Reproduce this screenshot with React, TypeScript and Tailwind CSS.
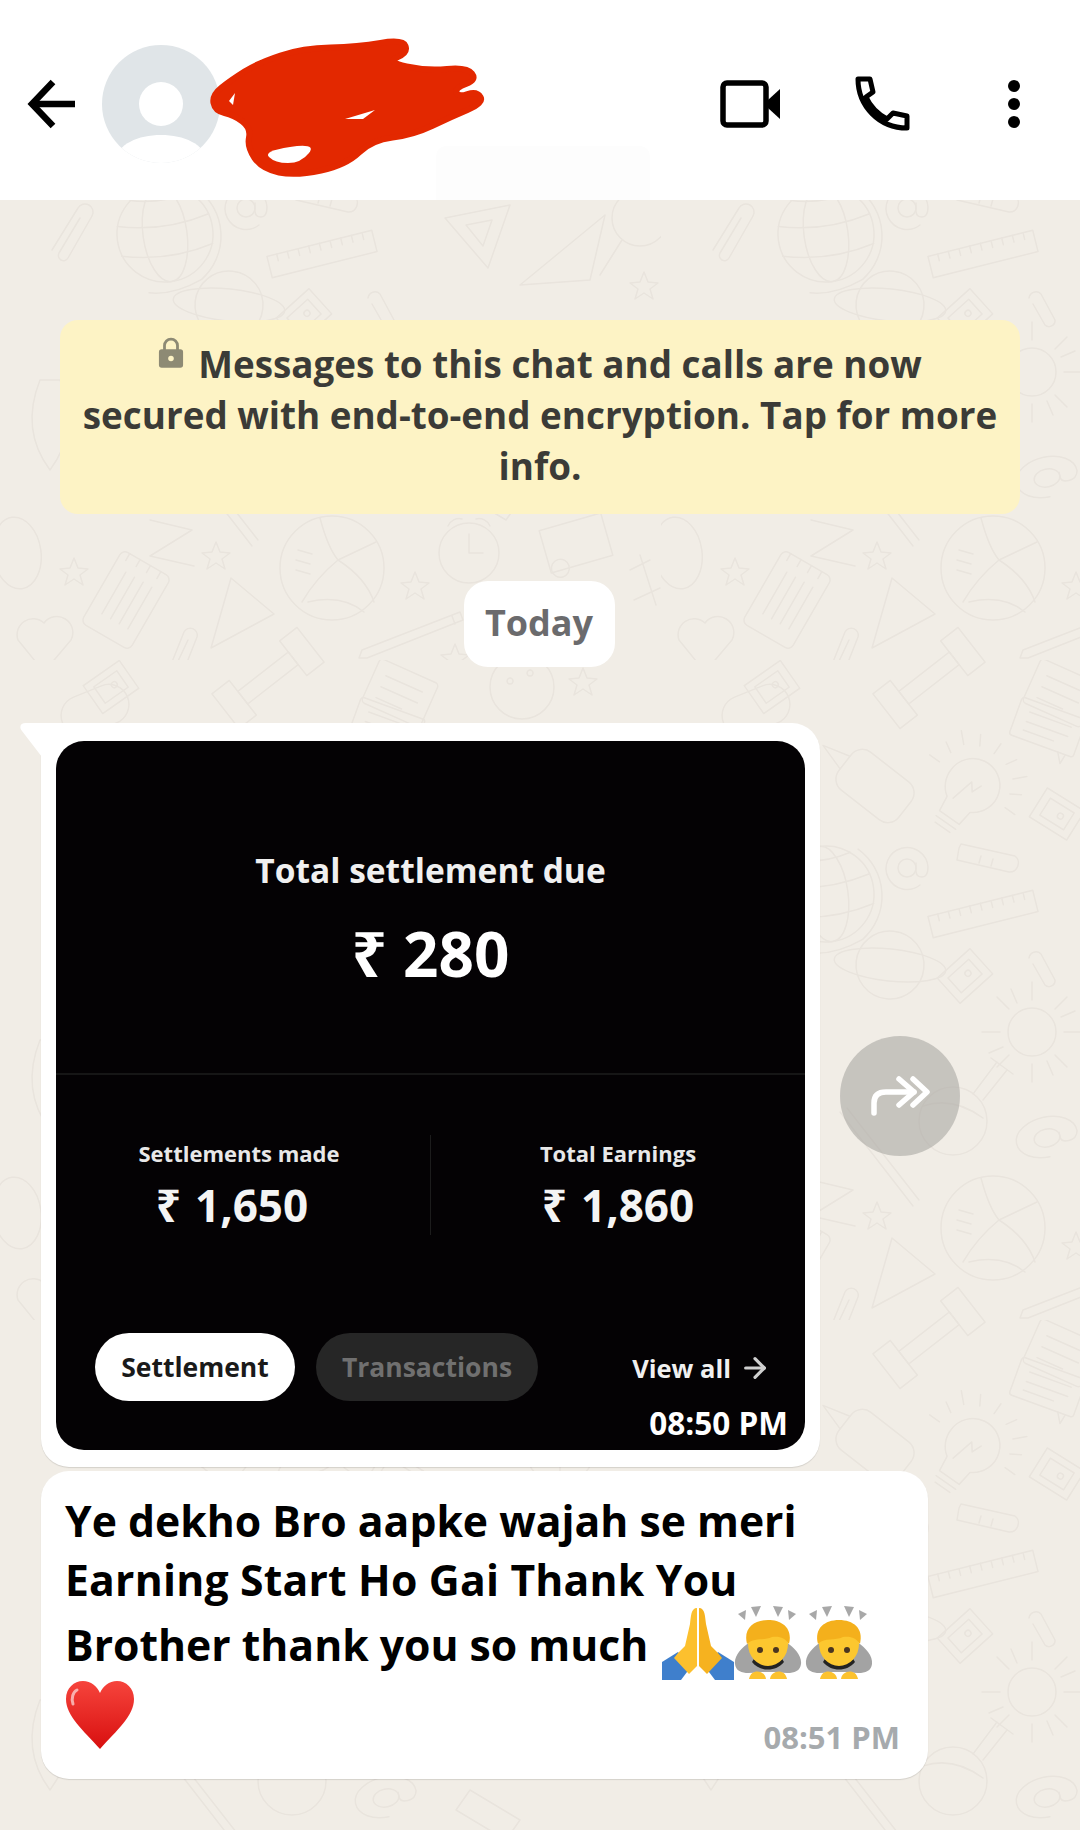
import React from "react";
import { ArrowRight } from "lucide-react";

const font = { fontFamily: '"Open Sans", "Noto Sans", sans-serif' };

const star = "l4 10 10 1-8 6 3 10-9-6-9 6 3-10-8-6 10-1Z";

// closed curve through the midpoints of a hand traced outline
const smooth = (pts: number[][]) => {
  const mid = (a: number[], b: number[]) => [(a[0] + b[0]) / 2, (a[1] + b[1]) / 2];
  const start = mid(pts[pts.length - 1], pts[0]);
  let d = `M${start[0]} ${start[1]}`;
  pts.forEach((p, i) => {
    const m = mid(p, pts[(i + 1) % pts.length]);
    d += `Q${p[0]} ${p[1]} ${m[0]} ${m[1]}`;
  });
  return d + "Z";
};

const scribbleOutline = [
  [198, 4], [203, 18], [181, 27], [222, 36], [262, 32], [272, 45], [250, 53], [253, 62], [272, 56], [279, 68],
  [246, 82], [208, 100], [167, 105], [141, 130], [91, 141], [57, 134], [42, 112], [46, 93], [29, 80], [10, 76],
  [7, 60], [26, 45], [53, 28], [98, 13], [153, 12],
];

// doodles are placed by hand inside one 661x660 tile, page coords mod tile
const Wallpaper = () => (
  <svg className="absolute inset-0 h-full w-full" xmlns="http://www.w3.org/2000/svg">
    <defs>
      <pattern id="doodles" x="0" y="-200" width="661" height="660" patternUnits="userSpaceOnUse">
        <g fill="none" stroke="#e9e4dd" strokeWidth="1.5" strokeLinecap="round" strokeLinejoin="round">
          {/* globe */}
          <g transform="translate(165 234) rotate(-8)">
            <circle r="48" />
            <ellipse rx="22" ry="48" />
            <path d="M-46-14Q0-2 46-14M-46 16Q0 28 46 16M-30-38Q0-30 30-38" />
            <path d="M38-40A58 58 0 0 1 30 50M-24 56Q0 62 30 50" />
          </g>
          {/* paper clips */}
          <path d="M52 250L78 208a8 8 0 0 1 14 8L68 258a5 5 0 0 1-9-5L80 218" />
          <path d="M168 672L184 632a7 7 0 0 1 13 5L180 680a5 5 0 0 1-9-4L188 640" />
          <path d="M368 298a7 7 0 0 1 12-4L394 320a6 6 0 0 1-10 5L372 304" />
          {/* ruler */}
          <g transform="translate(322 254) rotate(-14)">
            <rect x="-54" y="-11" width="108" height="22" />
            <path d="M-44-11v7M-33-11v7M-22-11v7M-11-11v7M0-11v7M11-11v7M22-11v7M33-11v7M44-11v7" />
          </g>
          {/* set squares */}
          <path d="M445 218L510 205 488 268ZM466 225L492 220 483 246Z" />
          <path d="M520 285L605 215 590 280Z" />
          <path d="M211 648L231 578 274 614Z" />
          {/* magnifier */}
          <circle cx="640" cy="218" r="28" />
          <path d="M622 240L600 275" />
          {/* stars */}
          <path d={`M644 272${star}`} />
          <path d={`M415 572${star}`} />
          <path d={`M216 542${star}`} />
          <path d={`M74 558${star}`} />
          <path d={`M455 644${star}`} />
          <path d={`M583 8${star}`} />
          {/* at signs */}
          <g transform="translate(246 208)">
            <circle r="9" />
            <path d="M9-5v8q0 6 6 6t6-10a21 21 0 1 0-8 18" />
          </g>
          <g transform="translate(386 478) rotate(-12)">
            <ellipse rx="13" ry="9" />
            <path d="M13-3v5q0 5 8 5t10-8c0-12-14-20-30-20s-32 8-32 20 14 20 30 20" />
          </g>
          {/* glue bottle */}
          <g transform="translate(214 126) rotate(38)">
            <rect x="-38" y="-24" width="76" height="48" rx="14" />
            <path d="M-38-8L-66 0-38 8" />
          </g>
          {/* bulb */}
          <g transform="translate(309 128) rotate(35)">
            <path d="M-26-4A27 27 0 1 1 14 20L12 36H-12L-14 20A27 27 0 0 1-26-4Z" />
            <path d="M-12 42H12M-9 48H9M-8 18L-2-6 4 2 8-8" />
            <path d="M-40-4H-52M40-4H52M-30-32L-40-42M30-32L40-42M0-42V-54M-16-40L-22-50M16-40L22-50M36-18L46-24M-36-18L-46-24" />
          </g>
          {/* notes */}
          <g transform="translate(386 69) rotate(20)">
            <rect x="-34" y="-22" width="68" height="40" rx="3" />
            <path d="M-22-10H22M-22 0H22M-22 9H10M18 18L24 28 26 18" />
          </g>
          <g transform="translate(576 543) rotate(-16)">
            <rect x="-32" y="-22" width="64" height="44" />
            <circle cx="-22" cy="20" r="9" />
          </g>
          <g transform="translate(400 33) rotate(24)">
            <rect x="-32" y="-24" width="64" height="48" rx="4" />
            <path d="M-20-10H20M-20 2H20M-20 14H8" />
          </g>
          {/* sharpeners */}
          <g transform="translate(396 154) rotate(32)">
            <rect x="-22" y="-17" width="44" height="34" />
            <rect x="-14" y="-10" width="28" height="20" />
            <circle cx="4" r="3" />
          </g>
          <g transform="translate(304 316) rotate(-42)">
            <rect x="-22" y="-17" width="44" height="34" />
            <rect x="-14" y="-10" width="28" height="20" />
            <circle cx="4" r="3" />
          </g>
          <g transform="translate(111 27) rotate(-35)">
            <rect x="-22" y="-17" width="44" height="34" />
            <rect x="-14" y="-10" width="28" height="20" />
            <circle cx="4" r="3" />
          </g>
          {/* test tube */}
          <path d="M298 188L296 200 348 212a9 9 0 0 0 6-16L300 184ZM320 196l-2 7M332 199l-2 7" />
          {/* saturn */}
          <g transform="translate(229 305) rotate(6)">
            <circle r="34" />
            <ellipse rx="56" ry="16" />
          </g>
          {/* sun */}
          <circle cx="371" cy="372" r="24" />
          <path d="M371 340v-18M371 404v18M339 372h-18M403 372h18M348 349l-12-12M394 395l12 12M394 349l12-12M348 395l-12 12M356 343l-6-14M386 401l6 14M342 387l-14 6M400 357l14-6" />
          {/* flask */}
          <circle cx="292" cy="461" r="34" />
          <path d="M312 434L336 402M322 440L346 410M330 398L352 414M262 446Q292 436 322 458" />
          {/* long pin */}
          <path d="M179 452L252 546M186 448L258 540" />
          {/* volleyball */}
          <g transform="translate(332 568)">
            <circle r="52" />
            <path d="M-12-50Q-4-20 6-8L44-26M6-8Q-16 10-30 34M6-8Q34 10 42 34M-24 34Q10 26 32 44M-34-18l14 4M-36-8l14 4M-36 2l14 4" />
          </g>
          {/* clock */}
          <circle cx="469" cy="553" r="30" />
          <path d="M469 534v19h14M448 526a12 12 0 0 1 14-7M490 526a12 12 0 0 0-14-7" />
          {/* heart */}
          <path d="M44 672L18 640a16 16 0 0 1 26-17 16 16 0 0 1 27 17Z" />
          {/* notebook */}
          <g transform="translate(126 600) rotate(30)">
            <rect x="-28" y="-42" width="56" height="84" rx="6" />
            <path d="M-14-24V24M-4-24V24M6-24V24M16-24V24M-20-42V-34M-8-42V-34M4-42V-34M16-42V-34" />
          </g>
          {/* pencil */}
          <path d="M362 650L460 612l3 8-96 38-8 0ZM452 616l3 8" />
          {/* dumbbell */}
          <g transform="translate(268 678) rotate(-38)">
            <rect x="-54" y="-22" width="22" height="44" />
            <rect x="32" y="-22" width="22" height="44" />
            <rect x="-32" y="-8" width="64" height="16" />
          </g>
          <g transform="translate(268 18) rotate(-38)">
            <rect x="-54" y="-22" width="22" height="44" />
            <rect x="32" y="-22" width="22" height="44" />
            <rect x="-32" y="-8" width="64" height="16" />
          </g>
          {/* letters and odds */}
          <ellipse cx="17" cy="553" rx="24" ry="36" transform="rotate(-8 17 553)" />
          <path d="M150 520L192 530 150 556 194 566" />
          <path d="M630 570L650 560M634 600L660 588M640 555L656 605" />
          <circle cx="522" cy="27" r="32" />
          <path d="M510 18a3 3 0 1 0 .1 0M530 10a3 3 0 1 0 .1 0" />
          <path d="M40 380Q20 430 50 470Q80 430 60 380Z" />
          <circle cx="560" cy="130" r="34" />
          <path d="M530 112Q560 130 590 112M560 96v68" />
          <path d="M600 400l50 30-12 20-50-30Z" />
          <rect x="60" y="30" width="70" height="40" rx="20" transform="rotate(-22 95 50)" />
          <rect x="430" y="340" width="50" height="70" rx="8" transform="rotate(-18 455 375)" />
          <circle cx="560" cy="420" r="22" />
          <path d="M470 470L520 500 506 520 456 490Z" />
        </g>
      </pattern>
    </defs>
    <rect width="100%" height="100%" fill="url(#doodles)" />
  </svg>
);

const BackIcon = () => (
  <svg width="50" height="50" viewBox="0 0 50 50" fill="none" stroke="#000" strokeWidth="6.5">
    <path d="M6 25H48" />
    <path d="M26 3L5 25 26 47" />
  </svg>
);

const VideoIcon = () => (
  <svg width="62" height="48" viewBox="0 0 62 48">
    <rect x="3" y="3" width="43" height="42" rx="4" fill="none" stroke="#000" strokeWidth="5.5" />
    <path d="M48 20L60 9V39L48 28Z" fill="#000" />
  </svg>
);

const PhoneIcon = () => (
  <svg width="56" height="55" viewBox="0 0 56 55" fill="none">
    <path
      d="M3 3H15L18 16 11 21C15 30 23 38 32 43L38 37 52 40V52C24 52 3 30 3 3Z"
      stroke="#000"
      strokeWidth="5"
      strokeLinejoin="round"
    />
  </svg>
);

const Dots = () => (
  <div className="flex flex-col gap-[6px]">
    <div className="h-[12px] w-[12px] rounded-full bg-black" />
    <div className="h-[12px] w-[12px] rounded-full bg-black" />
    <div className="h-[12px] w-[12px] rounded-full bg-black" />
  </div>
);

const Avatar = () => (
  <svg width="118" height="118" viewBox="0 0 118 118" className="shrink-0">
    <defs>
      <clipPath id="avatarClip">
        <circle cx="59" cy="59" r="59" />
      </clipPath>
    </defs>
    <circle cx="59" cy="59" r="59" fill="#e0e5e8" />
    <g clipPath="url(#avatarClip)" fill="#fff">
      <circle cx="59" cy="59" r="22" />
      <path d="M12 116C16 99 36 90 59 90S102 99 106 116Q59 122 12 116Z" />
    </g>
  </svg>
);

const Scribble = () => (
  <svg className="absolute left-[205px] top-[35px]" width="285" height="150" viewBox="0 0 285 150">
    <path d={smooth(scribbleOutline)} fill="#e32800" stroke="#e32800" strokeWidth="6" strokeLinejoin="round" />
    <path d={smooth([[58, 116], [112, 108], [96, 128], [70, 128]])} fill="#fff" />
    <path d="M140 84L170 75 158 84Z" fill="#fff" />
    <path d="M24 66L30 58 28 70Z" fill="#fff" />
  </svg>
);

const ForwardIcon = () => (
  <svg width="60" height="42" viewBox="0 0 60 42" fill="none" stroke="#fff" strokeWidth="5.5" strokeLinecap="round" strokeLinejoin="round">
    <path d="M4 38V28C4 20 9 17 16 17H44" />
    <path d="M29 4L44 17 29 30" />
    <path d="M43 4L57 17 43 30" />
  </svg>
);

const PrayEmoji = () => (
  <svg width="72" height="74" viewBox="0 0 72 74" className="shrink-0">
    <path d="M0 74V56L16 46 28 62 19 74Z" fill="#3f7fcc" />
    <path d="M72 74V56L56 46 44 62 53 74Z" fill="#3f7fcc" />
    <path d="M35 2C29 2 29 10 28 18L23 40 16 47 12 52 27 68 35 60Z" fill="#fcc02e" />
    <path d="M37 2C43 2 43 10 44 18L49 40 56 47 60 52 45 68 37 60Z" fill="#f6b21f" />
  </svg>
);

const BowEmoji = () => (
  <svg width="68" height="74" viewBox="0 0 68 74" className="shrink-0">
    <g fill="#a8a8a8">
      <path d="M11 14L4 8 12 4Z" />
      <path d="M22 11L17 1 27 0Z" />
      <path d="M44 11L49 1 39 0Z" />
      <path d="M55 14L62 8 54 4Z" />
    </g>
    <path d="M16 36C7 42 0 50 1 58 2 68 14 68 24 66H44C54 68 66 68 67 58 68 50 61 42 52 36Z" fill="#a3a3a3" />
    <path d="M18 56C26 66 42 66 50 56L44 46H24Z" fill="#232323" />
    <ellipse cx="34" cy="38" rx="20" ry="22" fill="#fcc72f" />
    <path d="M13 38C9 22 20 14 34 14S59 22 55 38C51 32 46 30 38 31 30 35 20 31 13 38Z" fill="#f4b01c" />
    <circle cx="26" cy="44" r="3" fill="#4a3520" />
    <circle cx="42" cy="44" r="3" fill="#4a3520" />
    <path d="M15 73C17 62 31 64 32 73Z" fill="#fcc22e" />
    <path d="M53 73C51 62 37 64 36 73Z" fill="#fcc22e" />
  </svg>
);

const HeartEmoji = () => (
  <svg width="70" height="70" viewBox="0 0 70 70" className="shrink-0">
    <defs>
      <linearGradient id="heartFill" x1="0" y1="0" x2="0" y2="1">
        <stop offset="0" stopColor="#f6443c" />
        <stop offset="1" stopColor="#d80f0f" />
      </linearGradient>
    </defs>
    <path d="M35 69C18 50 1 36 1 19 1 8 9 1 18 1 26 1 32 6 35 13 38 6 44 1 52 1 61 1 69 8 69 19 69 36 52 50 35 69Z" fill="url(#heartFill)" />
    <path d="M12 10C8 12 6 18 8 24" stroke="#fff" strokeOpacity="0.6" strokeWidth="3" fill="none" strokeLinecap="round" />
  </svg>
);

const Stat = ({ label, value, shift }: { label: string; value: string; shift?: boolean }) => (
  <div className="flex flex-1 flex-col items-center">
    <div className={`text-[22px] font-bold leading-[30px] text-[#e8e8e8] ${shift ? "pr-[8px]" : ""}`}>{label}</div>
    <div className={`mt-[10px] flex items-center gap-[14px] text-[44px] font-bold leading-[54px] text-[#f4f4f4] ${shift ? "pr-[22px]" : ""}`}>
      <span>₹</span>
      <span>{value}</span>
    </div>
  </div>
);

const SettlementCard = () => (
  <div className="relative flex h-[709px] w-[749px] flex-col rounded-[28px] bg-[#040204] text-white">
    <div className="flex h-[334px] flex-col items-center border-b-2 border-[#161616] pt-[107px]">
      <div className="text-[33.5px] font-bold leading-[44px] text-[#f0f0f0]">Total settlement due</div>
      <div className="mt-[21px] flex items-center gap-[16px] text-[62px] font-bold leading-[80px]">
        <span>₹</span>
        <span>280</span>
      </div>
    </div>
    <div className="mt-[60px] flex h-[100px] items-center">
      <Stat label="Settlements made" value="1,650" shift />
      <div className="h-[100px] w-[1px] bg-[#1c1c1c]" />
      <Stat label="Total Earnings" value="1,860" />
    </div>
    <div className="mt-[98px] flex items-center pl-[39px] pr-[34px]">
      <div className="flex h-[68px] w-[200px] items-center justify-center rounded-full bg-white pt-[2px] text-[26.5px] font-bold text-[#1a1a1a]">
        Settlement
      </div>
      <div className="ml-[21px] flex h-[68px] w-[222px] items-center justify-center rounded-full bg-[#262626] pt-[2px] text-[26.5px] font-bold text-[#707070]">
        Transactions
      </div>
      <div className="ml-auto flex items-center gap-[8px] pt-[2px] text-[25.5px] font-bold text-[#f0f0f0]">
        View all
        <ArrowRight size={32} strokeWidth={2.4} color="#cfcfcf" />
      </div>
    </div>
    <div className="absolute bottom-[5px] right-[17px] text-[31.5px] font-bold leading-[44px] text-white">08:50 PM</div>
  </div>
);

export default function App() {
  return (
    <div className="relative flex h-[1830px] w-[1080px] flex-col overflow-hidden bg-white" style={font}>
      <header className="flex h-[200px] shrink-0 items-center bg-white pl-[27px] pr-[60px] pt-[7px]">
        <BackIcon />
        <div className="ml-[25px]">
          <Avatar />
        </div>
        <div className="ml-auto mr-[73px]">
          <VideoIcon />
        </div>
        <div className="mr-[97px]">
          <PhoneIcon />
        </div>
        <Dots />
        <Scribble />
      </header>

      <main className="relative flex-1 bg-[#f1ede6]">
        <Wallpaper />
        <div className="relative flex h-full flex-col">
          <div className="mx-[60px] mt-[120px] flex h-[194px] flex-col items-center justify-center rounded-[18px] bg-[#fdf3c5] px-[10px] pb-[4px] text-center text-[36.8px] font-bold leading-[51px] text-[#3b3b37]">
            <div className="flex items-start gap-[14px]">
              <svg width="26" height="32" viewBox="0 0 28 34" className="mt-[-2px] shrink-0">
                <path d="M7 14V9a7 7 0 0 1 14 0v5" fill="none" stroke="#8d8a74" strokeWidth="3" />
                <rect x="1" y="13" width="26" height="20" rx="3" fill="#8d8a74" />
                <circle cx="14" cy="23" r="3" fill="#fdf3c5" />
              </svg>
              <span>Messages to this chat and calls are now</span>
            </div>
            <div>secured with end-to-end encryption. Tap for more</div>
            <div>info.</div>
          </div>

          <div className="mr-[2px] mt-[67px] flex h-[86px] w-[151px] items-center justify-center self-center rounded-[24px] bg-white pb-[2px] text-[36px] font-bold text-[#6b6b6d]">
            Today
          </div>

          <div className="mt-[56px] flex items-center gap-[20px] pl-[41px]">
            <div className="relative w-[779px] rounded-[28px] rounded-tl-none bg-white px-[15px] pb-[17px] pt-[18px] shadow-[0_1px_1px_rgba(0,0,0,0.12)]">
              <svg className="absolute left-[-21px] top-0" width="22" height="34" viewBox="0 0 22 34">
                <path d="M22 34L2 8C-1 4 0 0 6 0H22Z" fill="#fff" />
              </svg>
              <SettlementCard />
            </div>
            <div className="mt-[1px] flex h-[120px] w-[120px] items-center justify-center rounded-full bg-[#aaa8a3]/60">
              <ForwardIcon />
            </div>
          </div>

          <div className="ml-[41px] mt-[4px] h-[308px] w-[887px] rounded-[28px] bg-white pl-[24px] pr-[28px] pt-[21px] shadow-[0_1px_1px_rgba(0,0,0,0.12)]">
            <div className="text-[42.7px] font-bold text-black">
              <div className="leading-[58px]">Ye dekho Bro aapke wajah se meri</div>
              <div className="mt-[1px] leading-[58px] tracking-[0.2px]">Earning Start Ho Gai Thank You</div>
              <div className="flex h-[71px] items-end">
                <span className="mr-[14px] pb-[6px] leading-[58px]">Brother thank you so much</span>
                <PrayEmoji />
                <BowEmoji />
                <span className="w-[3px]" />
                <BowEmoji />
              </div>
            </div>
            <div className="flex items-start justify-between">
              <HeartEmoji />
              <div className="mt-[36px] text-[31px] font-bold leading-[42px] text-[#a6aaad]">08:51 PM</div>
            </div>
          </div>
        </div>
      </main>

      <div className="absolute left-[436px] top-[146px] h-[54px] w-[214px] rounded-t-[10px] bg-[#fdfdfd]" />
    </div>
  );
}
